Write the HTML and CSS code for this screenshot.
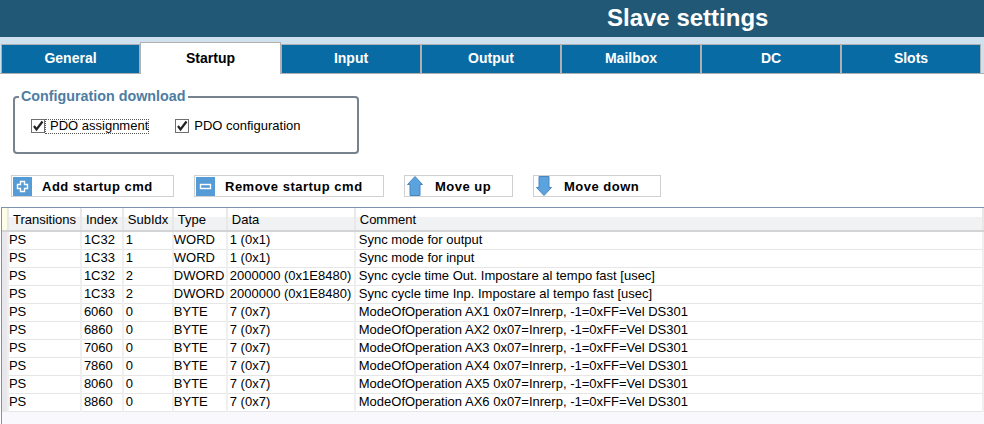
FILE: index.html
```html
<!DOCTYPE html>
<html lang="en">
<head>
    <meta charset="UTF-8">
    <title>Slave settings</title>
    <link rel="stylesheet" href="styles.css">
</head>
<body>

    <!-- Title bar -->
    <div class="title-bar">Slave settings</div>

    <!-- Tabs -->
    <div class="tabs">
        <div class="tab first">General</div>
        <div class="tab active">Startup</div>
        <div class="tab">Input</div>
        <div class="tab">Output</div>
        <div class="tab">Mailbox</div>
        <div class="tab">DC</div>
        <div class="tab">Slots</div>
    </div>

    <!-- Configuration download -->
    <fieldset class="config-group">
        <legend>Configuration download</legend>
        <label class="check"><span class="box"><svg width="12" height="12" viewBox="0 0 12 12"><path d="M2 6 L4.5 9.5 L10.5 1.5" fill="none" stroke="#222" stroke-width="2.2"/></svg></span><span class="check-label focused">PDO assignment</span></label>
        <label class="check"><span class="box"><svg width="12" height="12" viewBox="0 0 12 12"><path d="M2 6 L4.5 9.5 L10.5 1.5" fill="none" stroke="#222" stroke-width="2.2"/></svg></span><span class="check-label">PDO configuration</span></label>
    </fieldset>

    <!-- Toolbar -->
    <div class="toolbar">
        <button class="cmd cmd-add">
            <span class="cmd-icon"><svg width="19" height="19" viewBox="0 0 19 19"><path d="M7.5 4.5h4v3h3v4h-3v3h-4v-3h-3v-4h3z" fill="none" stroke="#fff" stroke-width="1.4"/></svg></span>
            <span class="cmd-text">Add startup cmd</span>
        </button>
        <button class="cmd cmd-remove">
            <span class="cmd-icon"><svg width="19" height="19" viewBox="0 0 19 19"><rect x="4.5" y="7.5" width="10" height="4" fill="none" stroke="#fff" stroke-width="1.4"/></svg></span>
            <span class="cmd-text">Remove startup cmd</span>
        </button>
        <button class="cmd cmd-up">
            <svg class="arrow" width="16" height="20" viewBox="0 0 16 20"><path d="M8 .5 L15.5 8.5 H13 V19.5 H3 V8.5 H.5 Z" fill="#5ba3df" stroke="#4a86bd"/></svg>
            <span class="cmd-text">Move up</span>
        </button>
        <button class="cmd cmd-down">
            <svg class="arrow" width="16" height="20" viewBox="0 0 16 20"><path d="M3 .5 H13 V11.5 H15.5 L8 19.5 L.5 11.5 H3 Z" fill="#5ba3df" stroke="#4a86bd"/></svg>
            <span class="cmd-text">Move down</span>
        </button>
    </div>

    <!-- Startup commands -->
    <div class="grid-wrap">
        <table class="grid">
            <thead>
                <tr>
                    <th class="marker"></th>
                    <th>Transitions</th>
                    <th>Index</th>
                    <th>SubIdx</th>
                    <th>Type</th>
                    <th>Data</th>
                    <th>Comment</th>
                </tr>
            </thead>
            <tbody>
                <tr><td class="marker"></td><td>PS</td><td>1C32</td><td>1</td><td>WORD</td><td>1 (0x1)</td><td>Sync mode for output</td></tr>
                <tr><td class="marker"></td><td>PS</td><td>1C33</td><td>1</td><td>WORD</td><td>1 (0x1)</td><td>Sync mode for input</td></tr>
                <tr><td class="marker"></td><td>PS</td><td>1C32</td><td>2</td><td>DWORD</td><td>2000000 (0x1E8480)</td><td>Sync cycle time Out. Impostare al tempo fast [usec]</td></tr>
                <tr><td class="marker"></td><td>PS</td><td>1C33</td><td>2</td><td>DWORD</td><td>2000000 (0x1E8480)</td><td>Sync cycle time Inp. Impostare al tempo fast [usec]</td></tr>
                <tr><td class="marker"></td><td>PS</td><td>6060</td><td>0</td><td>BYTE</td><td>7 (0x7)</td><td>ModeOfOperation AX1 0x07=Inrerp, -1=0xFF=Vel DS301</td></tr>
                <tr><td class="marker"></td><td>PS</td><td>6860</td><td>0</td><td>BYTE</td><td>7 (0x7)</td><td>ModeOfOperation AX2 0x07=Inrerp, -1=0xFF=Vel DS301</td></tr>
                <tr><td class="marker"></td><td>PS</td><td>7060</td><td>0</td><td>BYTE</td><td>7 (0x7)</td><td>ModeOfOperation AX3 0x07=Inrerp, -1=0xFF=Vel DS301</td></tr>
                <tr><td class="marker"></td><td>PS</td><td>7860</td><td>0</td><td>BYTE</td><td>7 (0x7)</td><td>ModeOfOperation AX4 0x07=Inrerp, -1=0xFF=Vel DS301</td></tr>
                <tr><td class="marker"></td><td>PS</td><td>8060</td><td>0</td><td>BYTE</td><td>7 (0x7)</td><td>ModeOfOperation AX5 0x07=Inrerp, -1=0xFF=Vel DS301</td></tr>
                <tr><td class="marker"></td><td>PS</td><td>8860</td><td>0</td><td>BYTE</td><td>7 (0x7)</td><td>ModeOfOperation AX6 0x07=Inrerp, -1=0xFF=Vel DS301</td></tr>
            </tbody>
        </table>
    </div>

</body>
</html>
```

FILE: styles.css
```css
* {
    box-sizing: border-box;
    margin: 0;
    padding: 0;
    font-family: "Liberation Sans", Arial, sans-serif;
}
html, body {
    height: 100%;
    overflow: hidden;
}
body {
    display: flex;
    flex-direction: column;
    background-color: #ffffff;
    color: #000;
    font-size: 13px;
}
.title-bar {
    flex: none;
    height: 37px;
    padding-left: 607px;
    background-color: #215876;
    color: #fff;
    font-size: 24px;
    font-weight: bold;
    line-height: 36px;
}
/* Tabs */
.tabs {
    flex: none;
    display: flex;
    height: 37px;
    padding: 7px 0 0 1px;
    background-color: #cfe0ef;
    border-bottom: 1px solid #b0b0b0;
}
.tab {
    width: 140px;
    height: 30px;
    background-color: #096ba3;
    border: 1px solid #b0b0b0;
    color: #fff;
    font-size: 14px;
    font-weight: bold;
    line-height: 26px;
    text-align: center;
}
.tab.first {
    width: 139px;
}
.tab.active {
    width: 141px;
    height: 32px;
    margin-top: -2px;
    background-color: #fff;
    border-bottom: 0;
    color: #000;
    line-height: 30px;
}
/* Group box */
.config-group {
    flex: none;
    display: flex;
    width: 346px;
    height: 66px;
    margin: 14px 0 0 13px;
    padding: 0 0 0 16px;
    border: 2px solid #76838f;
    border-radius: 4px;
}
.config-group legend {
    margin-left: -12px;
    padding: 0 3px 2px 2px;
    color: #4d7da3;
    font-size: 14.3px;
    font-weight: bold;
}
.check {
    display: flex;
    align-items: center;
    height: 16px;
    margin-top: 12px;
    margin-right: 26px;
}
.box {
    display: flex;
    width: 14px;
    height: 14px;
    border: 1px solid #707070;
    background-color: #fff;
}
.check-label {
    padding: 0 0 1px 4px;
    border: 1px solid transparent;
    line-height: 12px;
}
.check-label.focused {
    border: 1px dotted #555;
}
/* Buttons */
.toolbar {
    flex: none;
    display: flex;
    gap: 20px;
    margin: 21px 0 0 11px;
}
.cmd {
    display: flex;
    align-items: center;
    height: 22px;
    padding-left: 1px;
    background-color: #fff;
    border: 1px solid #d0d0d0;
    font-size: 13px;
    font-weight: bold;
    letter-spacing: 0.5px;
}
.cmd-add { width: 163px; }
.cmd-remove { width: 190px; }
.cmd-up { width: 109px; }
.cmd-down { width: 128px; }
.cmd-icon {
    flex: none;
    display: flex;
    width: 19px;
    height: 19px;
    background-color: #559bd6;
}
.cmd-text {
    margin-left: 10px;
}
.arrow {
    flex: none;
    margin-left: 1px;
}
.cmd-up .cmd-text,
.cmd-down .cmd-text {
    margin-left: 12px;
}
/* Grid */
.grid-wrap {
    flex: 1;
    margin: 10px 0 0 1px;
    border-top: 1px solid #7a94b0;
    border-left: 1px solid #7a94b0;
    background-color: #f9f9fd;
}
.grid {
    border-collapse: collapse;
    table-layout: fixed;
}
.grid th {
    height: 23px;
    padding: 0 0 0 4px;
    background: linear-gradient(#ffffff 0, #ffffff 40%, #f1f2f4 40%, #f1f2f4 100%);
    border-right: 2px solid #e8e8e8;
    border-bottom: 2px solid #d4d4d4;
    font-weight: normal;
    text-align: left;
    white-space: nowrap;
}
.grid td {
    height: 18px;
    padding: 0 0 1px 2px;
    background-color: #fff;
    border-right: 2px solid #efefef;
    border-bottom: 1px solid #e6e6e6;
    white-space: nowrap;
}
.grid td:nth-child(2),
.grid td:nth-child(5) {
    padding-left: 0;
}
.grid td:nth-child(7) {
    padding-left: 3px;
}
.grid th.marker {
    width: 6px;
    padding: 0;
    background: #fdfde8;
}
.grid td.marker {
    padding: 0;
    background: #e8e8ec;
}
.grid th:nth-child(2) { width: 73px; }
.grid th:nth-child(3) { width: 42px; }
.grid th:nth-child(4) { width: 50px; }
.grid th:nth-child(5) { width: 54px; }
.grid th:nth-child(6) { width: 128px; }
.grid th:nth-child(7) { width: 631px; }
```
